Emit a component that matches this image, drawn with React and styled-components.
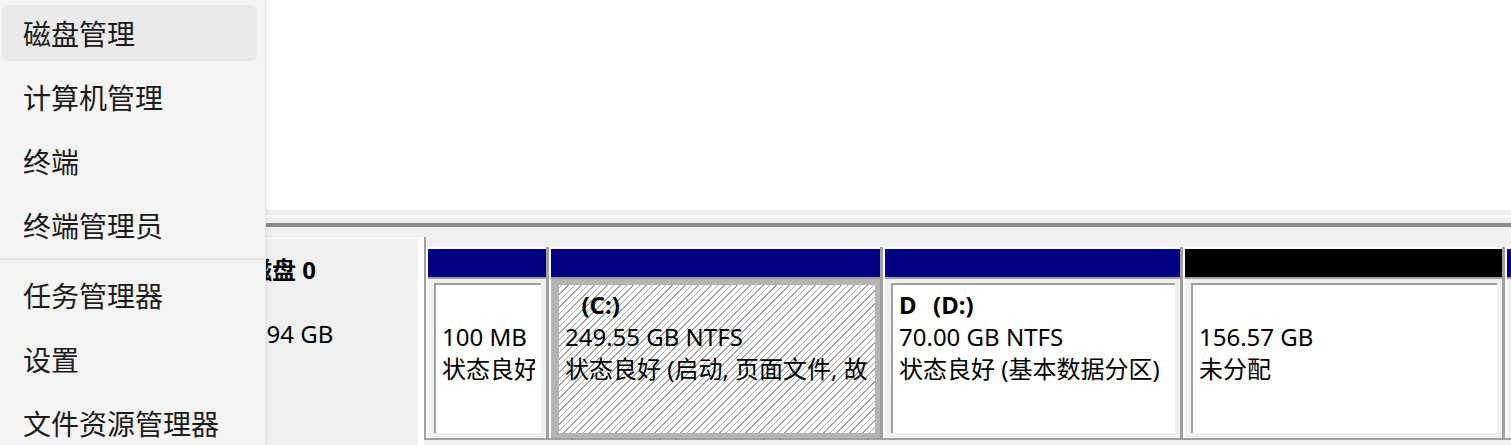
import styled, { createGlobalStyle, css } from 'styled-components';

const GlobalStyle = createGlobalStyle`
  html, body {
    margin: 0;
    padding: 0;
    overflow: hidden;
    background: #fff;
  }
  body {
    font-family: "Noto Sans", "Noto Sans CJK SC", sans-serif;
  }
`;

const Window = styled.div`
  position: relative;
  width: 1511px;
  height: 445px;
  overflow: hidden;
  background: #fff;
  display: flex;
  flex-direction: column;
`;

const TopPane = styled.div`
  height: 210px;
  flex: none;
  background: #fff;
`;

const Splitter = styled.div`
  height: 28px;
  flex: none;
  background: linear-gradient(
    to bottom,
    #eeeeee 0 5px,
    #ffffff 5px 7px,
    #efefef 7px 13px,
    #8a8a8a 13px 17px,
    #f0f0f0 17px
  );
`;

const DiskRow = styled.div`
  flex: 1;
  display: flex;
  background: #f0f0f0;
  font-size: 24px;
  color: #000;
`;

const DiskLabel = styled.div`
  width: 418px;
  flex: none;
  box-sizing: border-box;
  border-top: 1px solid #fff;
  padding: 15px 0 0 219px;
  line-height: 32px;
  white-space: nowrap;
`;

const LabelTitle = styled.div`
  font-weight: 700;
  display: flex;
  align-items: center;
  gap: 5px;
`;

const DiskIcon = styled.svg`
  width: 24px;
  height: 24px;
  flex: none;
`;

const PartitionArea = styled.div`
  flex: 1;
  display: flex;
  flex-direction: column;
  border-left: 6px solid #fff;
  border-bottom: 3px solid #a0a0a0;
  padding-bottom: 6px;
  margin-top: -1px;
`;

const Columns = styled.div`
  display: flex;
  border-left: 2px solid #a0a0a0;
  padding-top: 10px;
`;

const Column = styled.div`
  flex: none;
  width: ${p => p.$width}px;
  display: flex;
  flex-direction: column;
  border-left: ${p => (p.$first ? 'none' : '3px solid #a0a0a0')};
  border-bottom: 2px solid #a0a0a0;
`;

const ColumnBody = styled.div`
  display: flex;
  flex-direction: column;
  border-left: 2px solid #fff;
  border-top: 2px solid #fff;
`;

const Bar = styled.div`
  height: 28px;
  background: ${p => p.$color};
  border-bottom: 2px solid #a0a0a0;
`;

const Slot = styled.div`
  padding: 4px 5px 5px 6px;
  background: ${p => (p.$selected ? '#b4b4b4' : '#f0f0f0')};
`;

const Box = styled.div`
  height: 144px;
  border-top: 2px solid ${p => (p.$selected ? '#b4b4b4' : '#a0a0a0')};
  border-left: 2px solid ${p => (p.$selected ? '#b4b4b4' : '#a0a0a0')};
  padding: 4px 6px 0 6px;
  ${p =>
    p.$selected
      ? css`
          background: repeating-linear-gradient(
            -45deg,
            #ffffff 0 3.6px,
            #a6a6a6 3.6px 4.6px
          );
        `
      : css`
          background: #fff;
        `}
`;

const BoxText = styled.div`
  overflow: hidden;
  white-space: pre;
  line-height: 32px;
`;

const Name = styled.div`
  font-weight: 700;
  height: 32px;
  word-spacing: 2px;
`;

const Line = styled.div`
  height: 32px;
`;

const Menu = styled.nav`
  position: absolute;
  top: 0;
  left: 0;
  width: 266px;
  height: 445px;
  box-sizing: border-box;
  padding: 5px 8px 0 2px;
  background: #f4f4f4;
  border-right: 1px solid #e4e4e4;
  box-shadow: 2px 0 6px rgba(0, 0, 0, 0.05);
  font-family: "Noto Sans CJK SC", "Noto Sans", sans-serif;
  font-size: 28px;
  color: #1b1b1b;
`;

const MenuItem = styled.div`
  height: 56px;
  margin-bottom: 8px;
  padding-left: 21px;
  display: flex;
  align-items: center;
  border-radius: 6px;
  background: ${p => (p.$active ? '#eaeaea' : 'transparent')};
`;

const MenuSeparator = styled.div`
  height: 2px;
  margin: -3px -8px 7px -2px;
  background: #e2e2e2;
`;

const partitions = [
  { width: 120, color: '#000080', name: '', size: '100 MB', status: '状态良好' },
  {
    width: 331,
    color: '#000080',
    name: '  (C:)',
    size: '249.55 GB NTFS',
    status: '状态良好 (启动, 页面文件, 故障转储, 基本数据分区)',
    selected: true,
  },
  { width: 297, color: '#000080', name: 'D  (D:)', size: '70.00 GB NTFS', status: '状态良好 (基本数据分区)' },
  { width: 319, color: '#000000', name: '', size: '156.57 GB', status: '未分配' },
  { width: 240, color: '#000080', name: '', size: '', status: '' },
];

const menuItems = ['磁盘管理', '计算机管理', '终端', '终端管理员', null, '任务管理器', '设置', '文件资源管理器'];

function Partition({ p, first }) {
  return (
    <Column $width={p.width} $first={first}>
      <ColumnBody>
        <Bar $color={p.color} />
        <Slot $selected={p.selected}>
          <Box $selected={p.selected}>
            <BoxText>
              <Name>{p.name || '\u00a0'}</Name>
              <Line>{p.size}</Line>
              <Line>{p.status}</Line>
            </BoxText>
          </Box>
        </Slot>
      </ColumnBody>
    </Column>
  );
}

export default function App() {
  return (
    <>
      <GlobalStyle />
      <Window>
        <TopPane />
        <Splitter />
        <DiskRow>
          <DiskLabel>
            <LabelTitle>
              <DiskIcon viewBox="0 0 24 24">
                <rect x="2" y="7" width="20" height="10" rx="1" fill="#9a9a9a" stroke="#555" />
                <rect x="16" y="11" width="3" height="2" fill="#2c8a2c" />
              </DiskIcon>
              磁盘 0
            </LabelTitle>
            <div>基本</div>
            <div>476.94 GB</div>
          </DiskLabel>
          <PartitionArea>
            <Columns>
              {partitions.map((p, i) => (
                <Partition key={i} p={p} first={i === 0} />
              ))}
            </Columns>
          </PartitionArea>
        </DiskRow>
        <Menu>
          {menuItems.map((item, i) =>
            item ? (
              <MenuItem key={i} $active={i === 0}>
                {item}
              </MenuItem>
            ) : (
              <MenuSeparator key={i} />
            )
          )}
        </Menu>
      </Window>
    </>
  );
}
